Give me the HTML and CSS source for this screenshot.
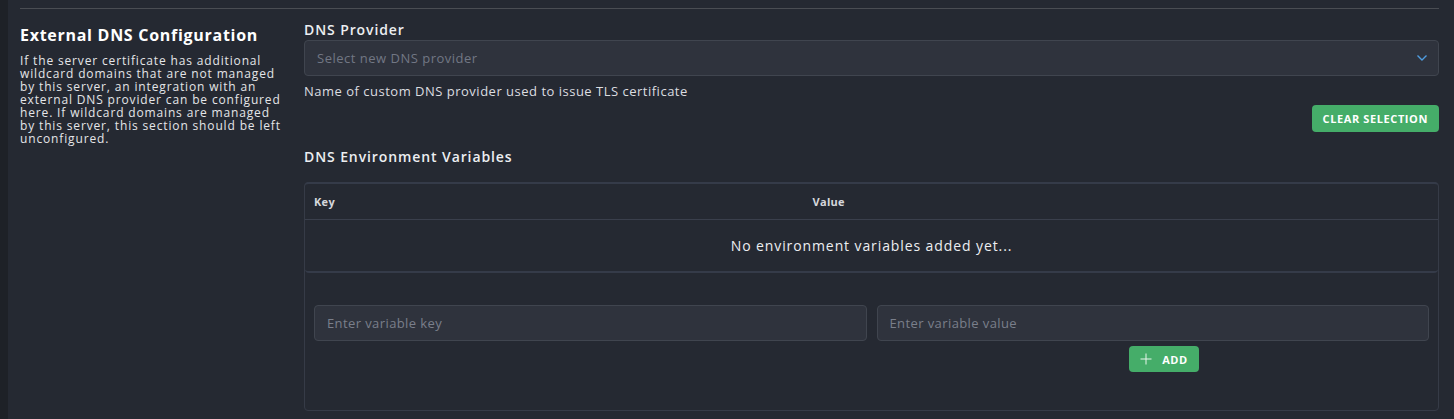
FILE: index.html
```html
<!DOCTYPE html>
<html lang="en">
<head>
<meta charset="utf-8">
<title>External DNS Configuration</title>
<link rel="stylesheet" href="styles.css">
</head>
<body>
<div class="page">
  <section class="section">
    <div class="intro">
      <h2 class="intro-title">External DNS Configuration</h2>
      <p class="intro-text">If the server certificate has additional wildcard domains that are not managed by this server, an integration with an external DNS provider can be configured here. If wildcard domains are managed by this server, this section should be left unconfigured.</p>
    </div>
    <div class="form">
      <label class="label">DNS Provider</label>
      <div class="select">
        <span class="select-placeholder">Select new DNS provider</span>
        <svg class="chevron" width="12" height="8" viewBox="0 0 12 8"><path d="M1.5 1.5 L6 6 L10.5 1.5" fill="none" stroke="#4f9de0" stroke-width="1.4"/></svg>
      </div>
      <p class="helper">Name of custom DNS provider used to issue TLS certificate</p>
      <div class="actions">
        <button class="btn btn-clear">CLEAR SELECTION</button>
      </div>
      <label class="label label-env">DNS Environment Variables</label>
      <div class="card">
        <table class="table">
          <thead>
            <tr><th class="col-key">Key</th><th class="col-value">Value</th></tr>
          </thead>
          <tbody>
            <tr><td colspan="2" class="empty">No environment variables added yet...</td></tr>
          </tbody>
        </table>
        <div class="add-form">
          <div class="inputs">
            <div class="input">Enter variable key</div>
            <div class="input">Enter variable value</div>
          </div>
          <div class="add-row">
            <button class="btn btn-add"><svg class="plus" width="12" height="12" viewBox="0 0 12 12"><path d="M6 0.5 V11.5 M0.5 6 H11.5" stroke="#e9f5ec" stroke-width="1"/></svg><span>ADD</span></button>
          </div>
        </div>
      </div>
    </div>
  </section>
</div>
</body>
</html>
```
FILE: styles.css
```css
* { box-sizing: border-box; }
html, body { margin: 0; padding: 0; }
body {
  background: #1e2127;
  font-family: "Open Sans", "DejaVu Sans", sans-serif;
  color: #e6e7ea;
  height: 419px;
  overflow: hidden;
}
.page {
  margin-left: 8px;
  background: #252932;
  height: 419px;
  padding: 8px 15px 0 12px;
}
.section {
  border-top: 1px solid #4a4d53;
  display: grid;
  grid-template-columns: 268px 1fr;
  column-gap: 16px;
  padding-top: 11px;
}
.intro { padding-top: 5px; }
.intro-title {
  margin: 0;
  font-size: 16px;
  line-height: 20px;
  font-weight: 700;
  color: #ffffff;
  letter-spacing: 0.72px;
}
.intro-text {
  margin: 9px 0 0;
  font-size: 12px;
  line-height: 13px;
  color: #e4e5e8;
  letter-spacing: 0.85px;
}
.form { display: flex; flex-direction: column; }
.label {
  font-size: 14px;
  line-height: 20px;
  font-weight: 600;
  color: #eceef1;
  letter-spacing: 0.9px;
}
.select {
  height: 36px;
  border: 1px solid #40454f;
  border-radius: 4px;
  background: #2f333d;
  display: flex;
  align-items: center;
  justify-content: space-between;
  padding: 0 10px 0 12px;
}
.select-placeholder { font-size: 13px; color: #727784; letter-spacing: 0.5px; }
.helper {
  margin: 7px 0 0;
  font-size: 13px;
  line-height: 16px;
  color: #dcdde0;
  letter-spacing: 0.5px;
}
.actions { display: flex; justify-content: flex-end; margin-top: 6px; }
.btn {
  border: 0;
  border-radius: 4px;
  background: #45ad69;
  color: #ffffff;
  font-family: inherit;
  font-weight: 700;
  font-size: 11px;
  cursor: pointer;
  letter-spacing: 0.6px;
}
.btn-clear { height: 27px; padding: 0 11px; }
.label-env { margin-top: 15px; }
.card {
  margin-top: 15px;
  border: 1px solid #363b47;
  border-radius: 4px;
  height: 229px;
  display: flex;
  flex-direction: column;
}
.table {
  width: 100%;
  border-collapse: separate;
  border-spacing: 0;
  border-top: 2px solid #353b49;
  border-radius: 4px;
  border-bottom: 2px solid #353b49;
  margin-top: -1px;
}
.table th {
  text-align: left;
  font-size: 11px;
  font-weight: 700;
  color: #d5d7dc;
  height: 36px;
  padding: 0 9px;
  border-bottom: 1px solid #3a3f4c;
  letter-spacing: 0.3px;
}
.col-key { width: 44%; }
.empty {
  height: 51px;
  text-align: center;
  font-size: 14px;
  font-weight: 500;
  color: #eceef1;
  letter-spacing: 0.9px;
}
.add-form { padding: 32px 9px 0; }
.inputs { display: grid; grid-template-columns: 1fr 1fr; column-gap: 10px; }
.input {
  height: 36px;
  border: 1px solid #40454f;
  border-radius: 4px;
  background: #2f333d;
  font-size: 13px;
  color: #7a7f8b;
  display: flex;
  align-items: center;
  padding: 0 12px;
  letter-spacing: 0.4px;
}
.add-row { display: flex; padding-left: 815px; margin-top: 5px; }
.btn-add {
  height: 26px;
  width: 70px;
  display: flex;
  align-items: center;
  justify-content: center;
  gap: 10px;
  padding: 0 8px;
}
```
